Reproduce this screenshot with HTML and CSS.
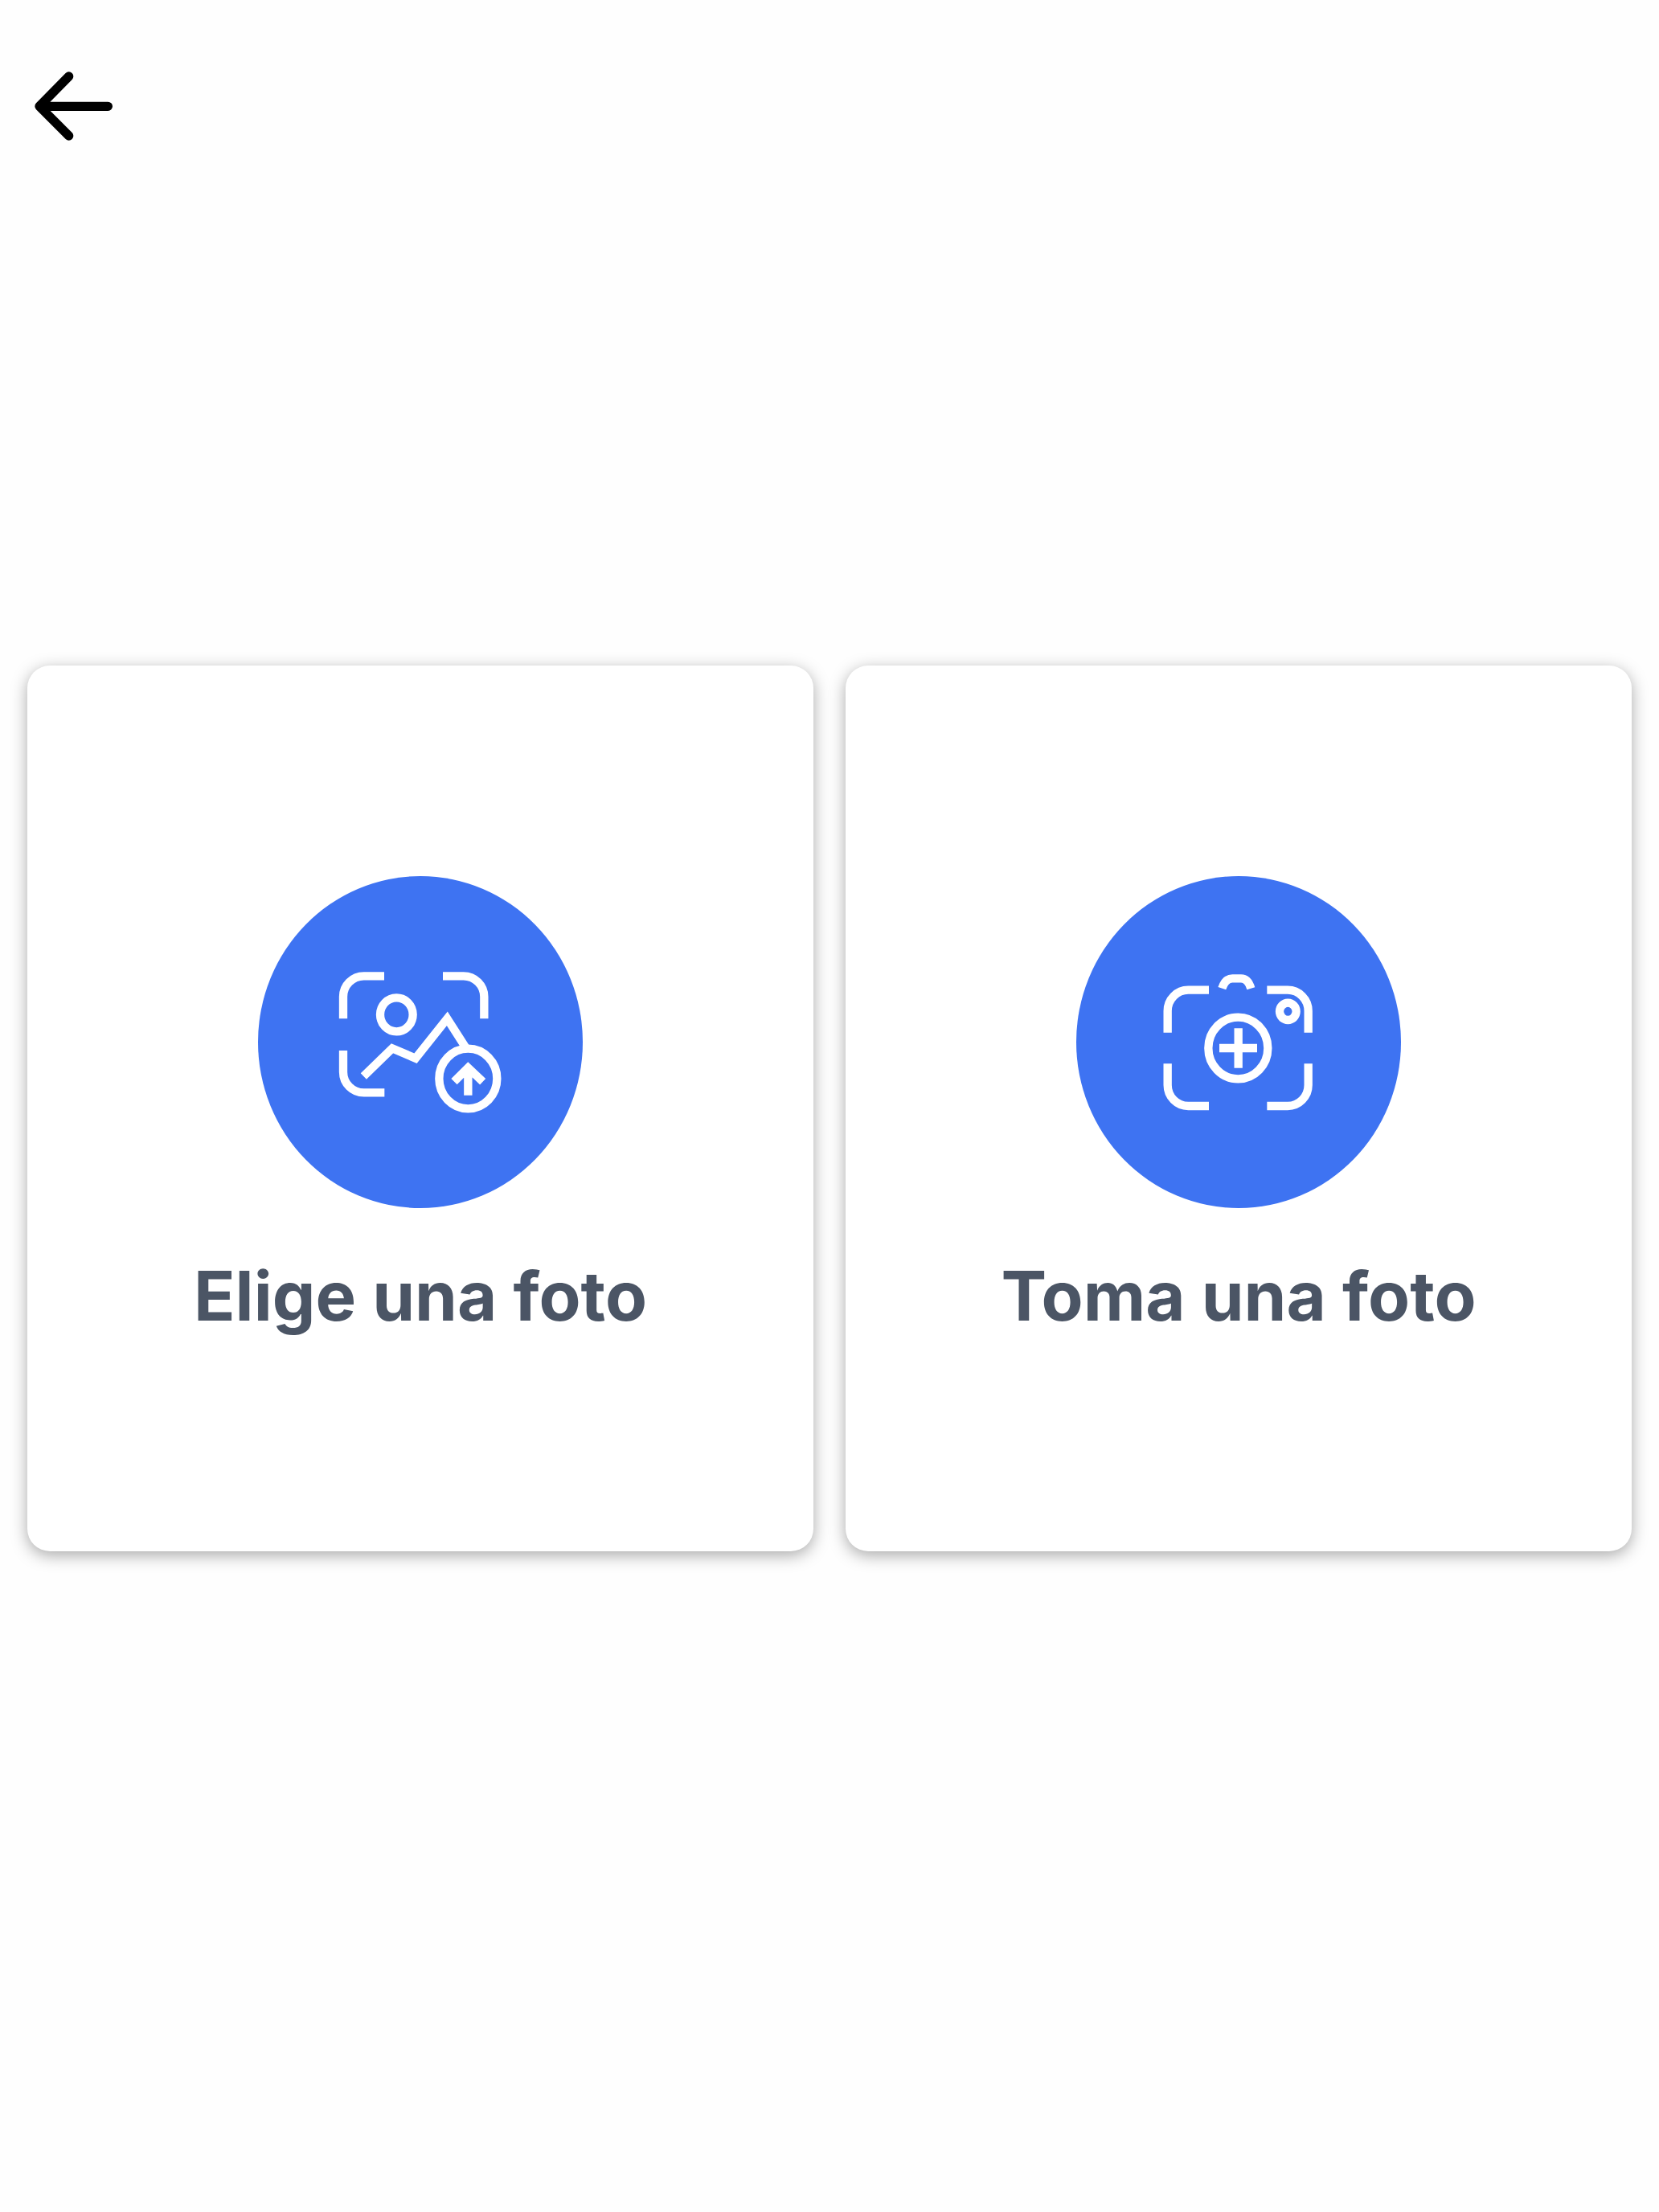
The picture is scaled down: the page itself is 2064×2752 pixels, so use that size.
FILE: index.html
```html
<!DOCTYPE html>
<html lang="es">
<head>
<meta charset="utf-8">
<meta name="viewport" content="width=device-width, initial-scale=1">
<title>Foto</title>
<link rel="stylesheet" href="styles.css">
</head>
<body>
<header class="topbar">
  <button class="back" type="button" aria-label="Volver">
    <svg class="back-icon" viewBox="0 0 420 360" fill="none" stroke="currentColor" stroke-width="34" stroke-linecap="round" stroke-linejoin="round" aria-hidden="true">
      <path d="M343 187H88M197 75L87 187L197 297"/>
      <path d="M87 187L118 158V215Z" fill="currentColor" stroke="none"/>
    </svg>
  </button>
</header>
<main class="options">
  <button class="card" type="button">
    <span class="disc">
      <svg class="disc-icon" viewBox="-237 -300 1212 1239" fill="none" stroke="currentColor" stroke-width="31" aria-hidden="true">
        <path d="M234 73H158A77 77 0 0 0 81 150V232M453 73H530A77 77 0 0 1 607 150V232M81 351V431A77 77 0 0 0 158 508H235"/>
        <ellipse cx="280" cy="217" rx="61" ry="63"/>
        <path d="M157 447L264 343L351 380L469 232L538 340"/>
        <ellipse cx="547" cy="456" rx="108" ry="112"/>
        <path d="M547 518V420M495 467L547 415L602 467"/>
      </svg>
    </span>
    <span class="label">Elige una foto</span>
  </button>
  <button class="card" type="button">
    <span class="disc">
      <svg class="disc-icon" viewBox="-243 -300 1212 1239" fill="none" stroke="currentColor" stroke-width="31" aria-hidden="true">
        <path d="M252 125H175A77 78 0 0 0 98 203V284M469 125H546A77 78 0 0 1 623 203V284M98 400V480A77 78 0 0 0 175 558H252M469 558H546A77 78 0 0 0 623 480V400"/>
        <path d="M301 119Q313 82 340 82H372Q398 82 409 119"/>
        <ellipse cx="547" cy="205" rx="31" ry="32"/>
        <ellipse cx="361" cy="342" rx="111" ry="115"/>
        <path d="M362 268V416M291 342H432"/>
      </svg>
    </span>
    <span class="label">Toma una foto</span>
  </button>
</main>
</body>
</html>
```
FILE: styles.css
```css
* {
  box-sizing: border-box;
}

body {
  margin: 0;
  min-height: 100vh;
  padding-top: 6px;
  display: grid;
  grid-template-rows: 1fr auto 1fr;
  background: #fefefe;
  color: #4b5565;
  font-family: Inter, "Liberation Sans", sans-serif;
}

.topbar {
  padding: 64px 20px;
}

.back {
  display: block;
  padding: 0;
  border: 0;
  background: none;
  color: #000;
  cursor: pointer;
}

.back-icon {
  display: block;
  width: 140px;
  height: 120px;
}

.options {
  display: grid;
  grid-template-columns: 1fr 1fr;
  gap: 40px;
  padding: 0 34px;
}

.card {
  display: flex;
  flex-direction: column;
  align-items: center;
  gap: 54px;
  padding: 262px 20px;
  border: 0;
  border-radius: 28px;
  background: #fff;
  box-shadow: 0 5px 20px rgba(0, 0, 0, 0.34);
  color: inherit;
  font: inherit;
  cursor: pointer;
}

.disc {
  display: block;
  width: 404px;
  height: 413px;
  border-radius: 50%;
  background: #3e73f2;
  color: #fff;
}

.disc-icon {
  display: block;
  width: 100%;
  height: 100%;
}

.label {
  font-size: 85px;
  font-weight: 700;
  line-height: 111px;
  white-space: nowrap;
}
```
